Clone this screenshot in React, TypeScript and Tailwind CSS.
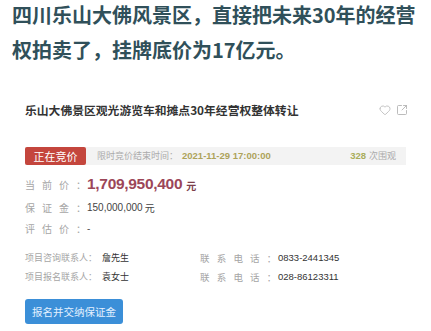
import React from "react";
import { Heart, SquareArrowOutUpRight } from "lucide-react";

const cjk = { fontFamily: '"Noto Sans CJK SC", "Liberation Sans", sans-serif' };
const num = { fontFamily: '"Liberation Sans", "Noto Sans CJK SC", sans-serif' };

function Label({ chars }: { chars: string[] }) {
  return (
    <div className="flex w-[62px] text-[10px] text-[#a6a6a6]" style={cjk}>
      {chars.map((c, i) => (
        <span key={i} className="w-[17px] shrink-0">
          {c}
        </span>
      ))}
    </div>
  );
}

export default function App() {
  return (
    <div className="w-[431px] h-[331px] overflow-hidden bg-white" style={cjk}>
      <div className="pl-[12px] mt-[-3px] text-[20px] leading-[35px] font-bold text-[#30505a]">
        四川乐山大佛风景区，直接把未来30年的经营
        <br />
        权拍卖了，挂牌底价为17亿元。
      </div>

      <div className="mt-[33px] h-[20px] pl-[25px] pr-[23px] flex items-center justify-between">
        <div className="text-[11.8px] font-bold text-[#333]">
          乐山大佛景区观光游览车和摊点30年经营权整体转让
        </div>
        <div className="flex items-center gap-[5px] text-[#b0b0b0]">
          <Heart size={12} strokeWidth={1.5} />
          <SquareArrowOutUpRight size={12} strokeWidth={1.7} />
        </div>
      </div>

      <div className="mt-[27px] ml-[25px] w-[381px] h-[18px] bg-[#f3f3f3] flex items-center">
        <div className="w-[61px] h-[18px] bg-[#c4463d] rounded-[2px] flex items-center justify-center text-[11px] text-white">
          正在竞价
        </div>
        <div className="ml-[11px] text-[9px] text-[#ababab]">限时竞价结束时间：</div>
        <div className="ml-[4px] text-[9.5px] font-bold text-[#aea35a]" style={num}>
          2021-11-29 17:00:00
        </div>
        <div className="ml-auto mr-[10px] flex items-center">
          <span className="text-[9.5px] font-bold text-[#a9ad5a]" style={num}>328</span>
          <span className="ml-[3px] text-[9px] text-[#ababab]">次围观</span>
        </div>
      </div>

      <div className="mt-[9px] h-[20px] pl-[25px] flex items-center">
        <Label chars={["当", "前", "价", "："]} />
        <span className="text-[15.5px] font-bold text-[#9c4658] tracking-[-0.3px]" style={num}>
          1,709,950,400
        </span>
        <span className="ml-[4px] mt-[3px] text-[10px] font-bold text-[#7d3e4a]">元</span>
      </div>

      <div className="mt-[4px] h-[18px] pl-[25px] flex items-center">
        <Label chars={["保", "证", "金", "："]} />
        <span className="text-[10px] text-[#444]" style={num}>150,000,000</span>
        <span className="ml-[2px] text-[10px] text-[#444]">元</span>
      </div>

      <div className="mt-[3px] h-[18px] pl-[25px] flex items-center">
        <Label chars={["评", "估", "价", "："]} />
        <span className="text-[10px] text-[#555]" style={num}>-</span>
      </div>

      <div className="mt-[12px] h-[18px] pl-[25px] flex items-center">
        <span className="w-[77px] text-[9px] text-[#a6a6a6]">项目咨询联系人：</span>
        <span className="w-[98px] text-[9px] text-[#333]">詹先生</span>
        <div className="flex w-[78px] text-[9.5px] text-[#a6a6a6]">
          {["联", "系", "电", "话", "："].map((c, i) => (
            <span key={i} className="w-[16.7px] shrink-0">{c}</span>
          ))}
        </div>
        <span className="text-[9.5px] text-[#333]" style={num}>0833-2441345</span>
      </div>

      <div className="mt-[1px] h-[18px] pl-[25px] flex items-center">
        <span className="w-[77px] text-[9px] text-[#a6a6a6]">项目报名联系人：</span>
        <span className="w-[98px] text-[9px] text-[#333]">袁女士</span>
        <div className="flex w-[78px] text-[9.5px] text-[#a6a6a6]">
          {["联", "系", "电", "话", "："].map((c, i) => (
            <span key={i} className="w-[16.7px] shrink-0">{c}</span>
          ))}
        </div>
        <span className="text-[9.5px] text-[#333]" style={num}>028-86123311</span>
      </div>

      <div className="mt-[13px] ml-[25px] w-[98px] h-[25px] bg-[#3b8fd8] rounded-[3px] flex items-center justify-center text-[10.5px] text-[#e4f1ff]">
        报名并交纳保证金
      </div>
    </div>
  );
}
